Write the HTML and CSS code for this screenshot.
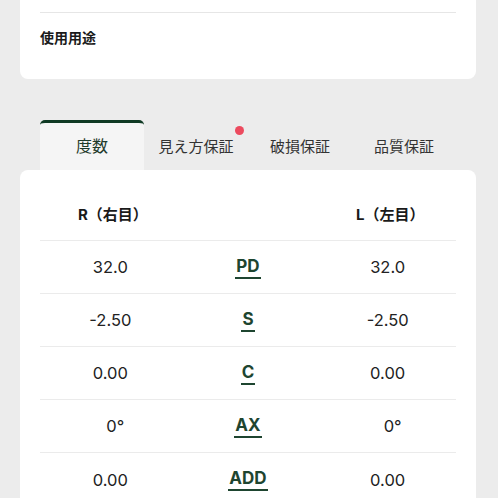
FILE: index.html
```html
<!DOCTYPE html>
<html lang="ja">
<head>
<meta charset="utf-8">
<link rel="stylesheet" href="styles.css">
</head>
<body>
<div class="page">
  <section class="card-top">
    <div class="top-divider"></div>
    <div class="usage">使用用途</div>
  </section>

  <nav class="tabs">
    <div class="tab active">度数</div>
    <div class="tab"><span class="tab-label">見え方保証<span class="dot"></span></span></div>
    <div class="tab">破損保証</div>
    <div class="tab">品質保証</div>
  </nav>

  <section class="card-main">
    <div class="row head">
      <div class="cell eye">R（右目）</div>
      <div class="cell"></div>
      <div class="cell eye">L（左目）</div>
    </div>
    <div class="row">
      <div class="cell val">32.0</div>
      <div class="cell"><span class="lbl">PD</span></div>
      <div class="cell val">32.0</div>
    </div>
    <div class="row">
      <div class="cell val">-2.50</div>
      <div class="cell"><span class="lbl">S</span></div>
      <div class="cell val">-2.50</div>
    </div>
    <div class="row">
      <div class="cell val">0.00</div>
      <div class="cell"><span class="lbl">C</span></div>
      <div class="cell val">0.00</div>
    </div>
    <div class="row">
      <div class="cell val deg">0°</div>
      <div class="cell"><span class="lbl">AX</span></div>
      <div class="cell val deg">0°</div>
    </div>
    <div class="row last">
      <div class="cell val">0.00</div>
      <div class="cell"><span class="lbl">ADD</span></div>
      <div class="cell val">0.00</div>
    </div>
  </section>
</div>
</body>
</html>
```

FILE: styles.css
```css
* { box-sizing: border-box; }
html, body { margin: 0; padding: 0; }
body {
  background: #ececec;
  font-family: Inter, "Noto Sans CJK JP", sans-serif;
  color: #222;
  width: 498px;
  height: 498px;
  overflow: hidden;
}
.page {
  padding: 0 22px 0 20px;
}
.card-top {
  background: #fff;
  border-radius: 0 0 8px 8px;
  height: 79px;
  padding: 12px 20px 0;
}
.top-divider {
  border-top: 1px solid #e6e6e6;
}
.usage {
  margin-top: 14px;
  font-size: 14px;
  font-weight: 700;
  line-height: 20px;
  color: #1a1a1a;
  font-family: "Noto Sans CJK JP", sans-serif;
}
.tabs {
  display: flex;
  margin-top: 41px;
  padding: 0 20px;
  height: 50px;
}
.tab {
  flex: 1;
  display: flex;
  align-items: center;
  justify-content: center;
  padding-top: 1px;
  font-family: "Noto Sans CJK JP", sans-serif;
  font-size: 15px;
  color: #333;
}
.tab.active {
  background: #f5f5f5;
  border-top: 3px solid #0f3a24;
  border-radius: 5px 5px 0 0;
  padding-top: 0;
  padding-bottom: 3px;
  font-size: 16px;
  color: #1f3a2b;
}
.tab-label {
  position: relative;
}
.dot {
  position: absolute;
  right: -10px;
  top: -9px;
  width: 9px;
  height: 9px;
  border-radius: 50%;
  background: #ec4a5e;
}
.card-main {
  background: #fff;
  border-radius: 8px 8px 0 0;
  padding: 0 20px;
  height: 340px;
}
.row {
  display: grid;
  grid-template-columns: 1fr 1fr 1fr;
  height: 53px;
  border-bottom: 1px solid #ebebeb;
  align-items: center;
}
.row.head {
  height: 71px;
  align-items: end;
  padding-bottom: 15px;
}
.row.last { border-bottom: none; }
.cell {
  text-align: center;
}
.head .eye {
  font-family: Inter, "Noto Sans CJK JP", sans-serif;
  font-size: 15px;
  font-weight: 700;
  line-height: 20px;
  color: #1a1a1a;
  padding-left: 7px;
}
.val {
  font-size: 16.5px;
  color: #222;
  padding-left: 2px;
}
.val.deg {
  padding-left: 12px;
}
.lbl {
  display: inline-block;
  font-size: 17px;
  font-weight: 700;
  color: #1e4530;
  line-height: 20px;
  border-bottom: 2px solid #1e4530;
  padding: 0 1px 1px;
}
```
